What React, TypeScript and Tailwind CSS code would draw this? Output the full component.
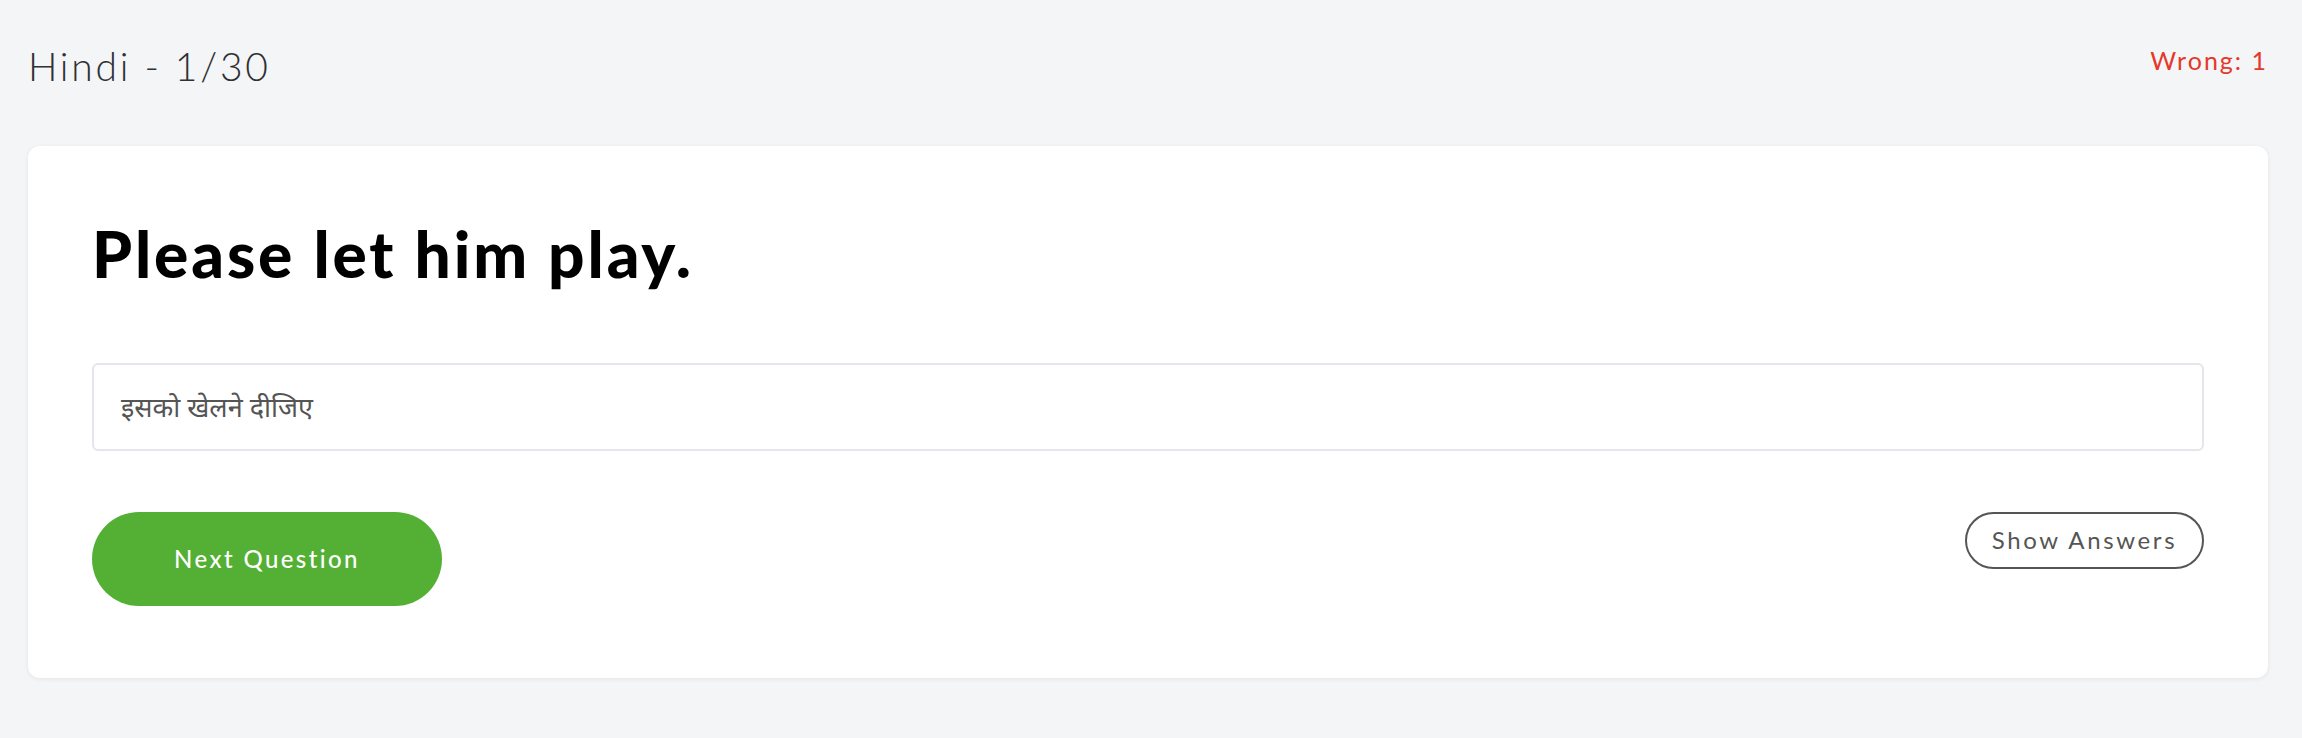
export default function App() {
  return (
    <div
      className="min-h-[738px] bg-[#f4f5f7] pl-[28px] pr-[34px]"
      style={{ fontFamily: "Lato, 'Noto Sans', sans-serif" }}
    >
      {/* header */}
      <div className="flex items-start justify-between pt-[40px]">
        <h1 className="text-[39px] font-light leading-[52px] tracking-[0.07em] text-[#2f3033]">
          Hindi - 1/30
        </h1>
        <span className="mt-[4px] text-[25px] leading-[32px] tracking-[0.08em] text-[#e5382b]">
          Wrong: 1
        </span>
      </div>

      {/* question card */}
      <div className="mt-[54px] rounded-xl bg-white px-[64px] pb-[72px] pt-[76px] shadow-[0_1px_5px_rgba(0,0,0,0.07)]">
        <h2 className="text-[64px] font-black leading-none tracking-[0.045em] text-black">
          Please let him play.
        </h2>

        <div className="mt-[77px] flex h-[88px] items-center rounded-md border-2 border-[#e3e6ea] px-[27px]">
          <span
            className="text-[27px] text-[#555]"
            style={{ fontFamily: "'Noto Sans', 'Noto Sans Devanagari', Lato, sans-serif" }}
          >
            इसको खेलने दीजिए
          </span>
        </div>

        <div className="mt-[61px] flex items-start justify-between">
          <button className="h-[94px] w-[350px] rounded-full bg-[#53b035] text-[24px] font-medium tracking-[0.1em] text-white">
            Next Question
          </button>
          <button className="h-[57px] w-[239px] rounded-full border-2 border-[#555] pb-[2px] text-[24px] tracking-[0.11em] text-[#555]">
            Show Answers
          </button>
        </div>
      </div>
    </div>
  );
}
